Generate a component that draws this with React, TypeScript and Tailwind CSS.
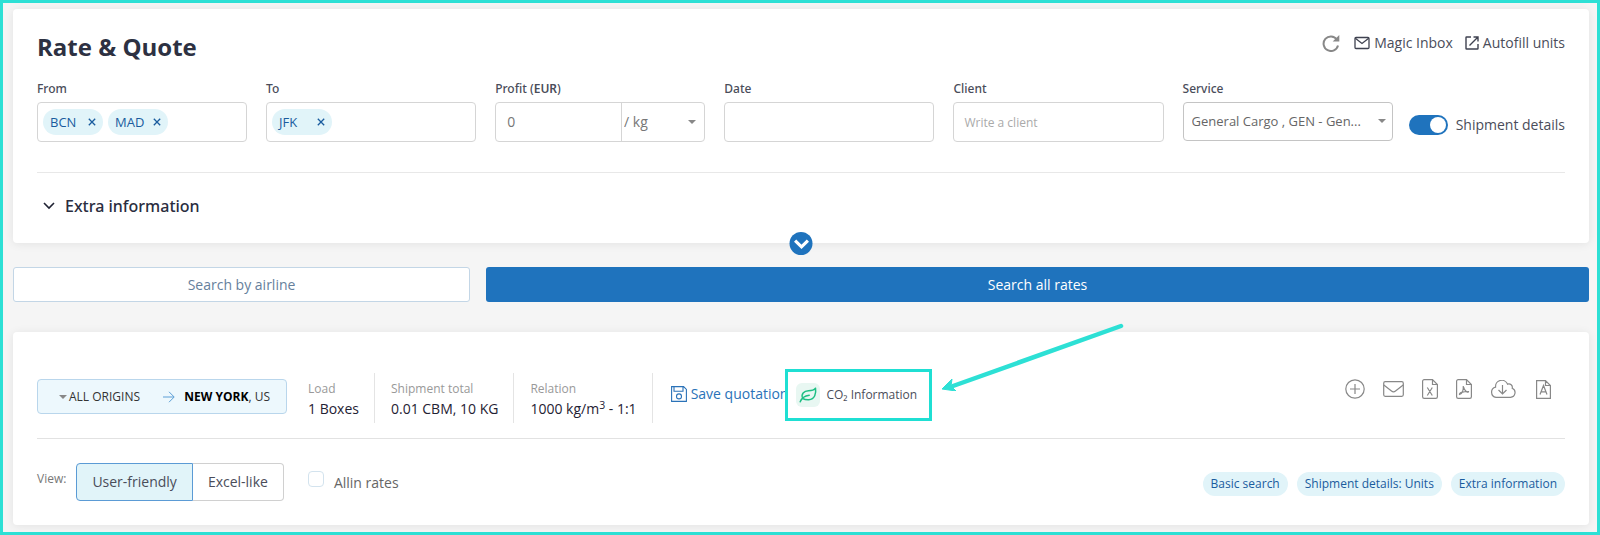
import React from "react";

const chip = "flex h-6 items-center rounded-full bg-[#e1f4f9] px-2 text-[#1a5c9e]";
const fieldBox = "h-10 w-full rounded border border-[#d5d5d5] bg-white";

function Caret({ className = "" }: { className?: string }) {
  return (
    <svg viewBox="0 0 8 4" className={`h-1 w-2 fill-[#888] ${className}`} aria-hidden="true">
      <path d="M0 0h8L4 4z" />
    </svg>
  );
}

function Field({ id, label, children }: { id: string; label: React.ReactNode; children: React.ReactNode }) {
  return (
    <div className="min-w-0">
      <label htmlFor={id} className="mb-[3px] block font-['Noto_Sans',sans-serif] text-xs leading-5 font-medium text-[#4a4d5a]">
        {label}
      </label>
      {children}
    </div>
  );
}

function TagField({ id, label, tags }: { id: string; label: string; tags: string[] }) {
  return (
    <Field id={id} label={label}>
      <div className={`${fieldBox} flex items-center gap-[5px] px-[5px]`}>
        {tags.map((tag) => (
          <span key={tag} className="flex h-[26px] w-[60px] shrink-0 items-center justify-between rounded-full bg-[#e1f4f9] px-[7px] text-[13px] text-[#1a5c9e]">
            {tag}
            <button type="button" aria-label={`Remove ${tag}`}>
              <svg viewBox="0 0 8 8" className="h-2 w-2 fill-none stroke-[#1a5c9e] stroke-[1.3]">
                <path d="M.8.8l6.4 6.4M7.2.8L.8 7.2" />
              </svg>
            </button>
          </span>
        ))}
        <input id={id} className="w-0 min-w-0 flex-1 outline-none" />
      </div>
    </Field>
  );
}

function Stat({ label, children }: { label: string; children: React.ReactNode }) {
  return (
    <div className="flex h-[50px] flex-col justify-center border-r border-[#e4e4e4] pt-0.5 pr-[15px]">
      <span className="text-xs leading-5 text-[#999]">{label}</span>
      <span className="text-sm leading-5 text-[#1f2233]">{children}</span>
    </div>
  );
}

function IconButton({ label, className, children }: { label: string; className: string; children: React.ReactNode }) {
  return (
    <button type="button" aria-label={label} className={className}>
      {children}
    </button>
  );
}

const thin = "h-full w-full fill-none stroke-[#888] stroke-[1.2]";

export default function App() {
  return (
    <div className="min-h-[535px] border-[3px] border-[#2de0d5] bg-[#f5f5f5] pt-1.5 pr-2 pb-[7px] pl-2.5 font-['Open_Sans','Noto_Sans',sans-serif] text-sm text-[#4a4d5a]">
      <section className="relative rounded bg-white px-6 pt-5 pb-[23px] shadow-[0_1px_10px_rgba(0,0,0,0.08)]">
        <header className="flex items-start justify-between">
          <h1 className="pt-0.5 text-2xl leading-8 font-bold text-[#2d3142]">Rate &amp; Quote</h1>
          <div className="flex h-7 items-center gap-3">
            <IconButton label="Refresh" className="mr-0.5 h-[18px] w-[18px]">
              <svg viewBox="0 0 18 18" className="h-full w-full fill-none stroke-[#888] stroke-2">
                <path d="M14.8 5.4A7.3 7.3 0 1 0 16 11.4" />
                <path d="M17.3 1v6.6h-6.6z" className="fill-[#888] stroke-none" />
              </svg>
            </IconButton>
            <a href="#inbox" className="flex items-center gap-1">
              <svg viewBox="0 0 16 14" className="h-3.5 w-4 fill-none stroke-[#3f4250] stroke-[1.3]">
                <rect x="1" y="1.5" width="14" height="11" rx="1" />
                <path d="M1.3 2.2L8 7.5l6.700-5.300" />
              </svg>
              Magic Inbox
            </a>
            <a href="#autofill" className="flex items-center gap-1">
              <svg viewBox="0 0 14 14" className="h-3.5 w-3.5 fill-none stroke-[#3f4250] stroke-[1.4]">
                <path d="M6 1H1.600a.6.6 0 0 0-.6.6v10.800a.6.6 0 0 0 .6.6h10.800a.6.6 0 0 0 .6-.6V8M8.500 1H13v4.500M13 1L4.500 9.500" />
              </svg>
              Autofill units
            </a>
          </div>
        </header>

        <div className="mt-4 flex gap-4">
          <div className="grid min-w-0 flex-1 grid-cols-6 gap-[19px]">
            <TagField id="from" label="From" tags={["BCN", "MAD"]} />
            <TagField id="to" label="To" tags={["JFK"]} />
            <Field id="profit" label={<>Profit (<b className="font-semibold">EUR</b>)</>}>
              <div className={`${fieldBox} flex text-[#777]`}>
                <input id="profit" defaultValue="0" className="w-3/5 px-[11px] outline-none" />
                <div className="relative w-2/5 border-l border-[#d5d5d5]">
                  <select aria-label="Profit unit" className="h-full w-full appearance-none px-0.5 outline-none">
                    <option>/ kg</option>
                  </select>
                  <Caret className="pointer-events-none absolute top-[17px] right-2" />
                </div>
              </div>
            </Field>
            <Field id="date" label="Date">
              <input id="date" className={`${fieldBox} px-2.5 outline-none`} />
            </Field>
            <Field id="client" label="Client">
              <input id="client" placeholder="Write a client" className={`${fieldBox} px-2.5 text-xs outline-none placeholder:text-[#aaa]`} />
            </Field>
            <Field id="service" label="Service">
              <div className="relative">
                <select id="service" className="h-[39px] w-full appearance-none rounded border border-[#c4c4c4] bg-white pr-7 pl-2 text-[13px] text-ellipsis text-[#666] outline-none">
                  <option>General Cargo , GEN - Gen...</option>
                </select>
                <Caret className="pointer-events-none absolute top-[17px] right-[7px]" />
              </div>
            </Field>
          </div>
          <label className="mt-[34px] flex h-6 items-center gap-2 whitespace-nowrap">
            <input
              type="checkbox"
              defaultChecked
              className="h-5 w-[39px] appearance-none rounded-full bg-[#bbb] p-0.5 before:block before:h-4 before:w-4 before:rounded-full before:bg-white checked:bg-[#1f73bd] checked:before:ml-auto"
            />
            Shipment details
          </label>
        </div>

        <hr className="mt-[30px] border-[#e8e8e8]" />
        <button type="button" className="mt-[19px] flex h-7 items-center gap-2.5 pl-1.5 font-['Noto_Sans',sans-serif] text-base font-medium text-[#2a2d40]">
          <svg viewBox="0 0 12 8" className="h-2 w-3 fill-none stroke-[#1f2233] stroke-[1.6]">
            <path d="M1 1l5 5 5-5" />
          </svg>
          Extra information
        </button>
        <button type="button" aria-label="Collapse search" className="absolute -bottom-3 left-1/2 flex h-[23px] w-[23px] -translate-x-1/2 items-center justify-center rounded-full bg-[#1f73bd]">
          <svg viewBox="0 0 16 10" className="h-2.5 w-4 fill-none stroke-white stroke-[3.200]">
            <path d="M1.600 1.700L8 7.800l6.400-6.100" />
          </svg>
        </button>
      </section>

      <div className="mt-6 flex gap-4">
        <button type="button" className="h-[35px] w-[29%] rounded-[3px] border border-[#c3d6e6] bg-white text-[#66809c]">
          Search by airline
        </button>
        <button type="button" className="h-[35px] flex-1 rounded-[3px] bg-[#1f73bd] font-medium text-white">
          Search all rates
        </button>
      </div>

      <section className="mt-[30px] rounded bg-white px-6 pt-[41px] pb-6 shadow-[0_1px_10px_rgba(0,0,0,0.08)]">
        <div className="flex h-[50px] items-start">
          <div className="mt-1.5 flex h-[35px] w-[250px] items-center rounded border border-[#b9d6ec] bg-[#edf8fd] pl-[21px] text-xs text-[#333]">
            <Caret className="mr-0.5" />
            ALL ORIGINS
            <svg viewBox="0 0 12 12" className="mr-[9px] ml-auto h-3 w-3 fill-none stroke-[#5d9fd6] stroke-1">
              <path d="M0 6h11M6 .8L11.200 6 6 11.200" />
            </svg>
            <span className="mr-4"><b className="text-black">NEW YORK</b>, US</span>
          </div>
          <div className="ml-[21px] flex gap-4">
            <Stat label="Load">1 Boxes</Stat>
            <Stat label="Shipment total">0.01 CBM, 10 KG</Stat>
            <Stat label="Relation">1000 kg/m<sup>3</sup> - 1:1</Stat>
          </div>
          <button type="button" className="mt-[11px] ml-[18px] flex items-center gap-1 whitespace-nowrap text-[#2a72b8]">
            <svg viewBox="0 0 16 16" className="h-4 w-4 fill-none stroke-[#2a72b8] stroke-[1.100]">
              <path d="M.6.6h12l2.800 2.800v12H.6zM3 .8v4.400h9V.8" />
              <circle cx="8" cy="10.400" r="2.500" />
            </svg>
            Save quotation
          </button>
          <div className="relative -mt-1 -ml-[3px] w-[147px] shrink-0 border-[3px] border-[#1fdfd3] bg-white">
            <button type="button" className="flex h-[46px] items-center gap-1.5 pl-2 text-xs whitespace-nowrap">
              <span className="flex h-6 w-6 items-center justify-center rounded-md bg-[#e8f7f2]">
                <svg viewBox="0 0 18 16" className="h-4 w-[18px] fill-none stroke-[#1dbf84] stroke-[1.500]" strokeLinecap="round" strokeLinejoin="round">
                  <path d="M1.200 14.800c1.500-3.800 4.500-6 9-6.500M3.800 11.500C1.600 7.200 5 3.900 9.500 3.700c3 0 5.400-.4 7-2.500.8 5-.6 11.300-6.700 11.600-2.300.1-4.300-.2-6-1.300z" />
                </svg>
              </span>
              <span>CO₂ Information</span>
            </button>
            <svg viewBox="0 0 184 72" className="pointer-events-none absolute -top-[53px] left-[153px] h-[72px] w-[184px] fill-none stroke-[#2de0d5]" aria-hidden="true">
              <path d="M180 7L12 67" strokeWidth="4.500" strokeLinecap="round" />
              <path d="M1 70L11 60l-1 7 5 5z" className="fill-[#2de0d5]" strokeWidth="1" />
            </svg>
          </div>
          <div className="mt-1.5 mr-[14px] ml-auto flex items-center">
            <IconButton label="Add" className="h-5 w-5">
              <svg viewBox="0 0 20 20" className={thin}>
                <circle cx="10" cy="10" r="9.200" />
                <path d="M10 5v10M5 10h10" />
              </svg>
            </IconButton>
            <IconButton label="Send by email" className="ml-[18px] h-4 w-[21px]">
              <svg viewBox="0 0 21 16" className={thin}>
                <rect x=".7" y=".7" width="19.600" height="14.600" rx="1.500" />
                <path d="M.8 4l7.700 6c1.300 1 2.700 1 4 0l7.700-6" />
              </svg>
            </IconButton>
            <IconButton label="Export to Excel" className="ml-[18px] h-5 w-4">
              <svg viewBox="0 0 16 20" className={thin}>
                <path d="M10.500.6H2.200A1.600 1.600 0 0 0 .6 2.200v15.600a1.600 1.600 0 0 0 1.600 1.600h11.600a1.600 1.600 0 0 0 1.600-1.600V5.500zM10.500.6v4.900h4.900M5.300 8.500l5 8M10.300 8.500l-5 8" />
              </svg>
            </IconButton>
            <IconButton label="Export to PDF" className="ml-[18px] h-5 w-4">
              <svg viewBox="0 0 16 20" className={thin}>
                <path d="M10.500.6H2.200A1.600 1.600 0 0 0 .6 2.200v15.600a1.600 1.600 0 0 0 1.600 1.600h11.600a1.600 1.600 0 0 0 1.600-1.600V5.500zM10.500.6v4.900h4.900" />
                <path d="M7.300 7c.2 4-1 7.500-3.800 8.500C2.700 14 7 12.500 12.500 12.500c.5 1.800-4 .6-5.200-5.500z" />
              </svg>
            </IconButton>
            <IconButton label="Download" className="ml-[18px] h-[18px] w-[26px]">
              <svg viewBox="0 0 26 18" className={thin}>
                <path d="M6 17.300h14.500a4.700 4.700 0 0 0 1.700-9 3.500 3.500 0 0 0-4.700-4.200A6.200 6.200 0 0 0 5.600 7.100 5.200 5.200 0 0 0 6 17.300zM12.500 5v9M8.500 10l4 4 4-4" />
              </svg>
            </IconButton>
            <IconButton label="Export text" className="ml-5 h-[19px] w-[15px]">
              <svg viewBox="0 0 15 19" className={thin}>
                <path d="M9.500.6H.6v17.800h13.800V5.500zM9.500.6v4.900h4.900M4 14.500l3.500-9 3.500 9M5 11.800h5" />
              </svg>
            </IconButton>
          </div>
        </div>

        <hr className="mt-[15px] border-[#e2e2e2]" />
        <div className="mt-6 flex items-center">
          <span className="mb-1.5 text-xs text-[#777]">View:</span>
          <div className="ml-2.5 flex h-[38px]">
            <button type="button" className="rounded-l border border-[#5b9bd5] bg-[#e1f4f9] px-[15px]">User-friendly</button>
            <button type="button" className="rounded-r border border-l-0 border-[#d0d0d0] bg-white px-[15px]">Excel-like</button>
          </div>
          <label className="ml-6 flex items-center gap-2.5 pt-0.5 text-[#666]">
            <input type="checkbox" className="mb-2 h-4 w-4 appearance-none rounded-sm border border-[#d3e3ee]" />
            Allin rates
          </label>
          <div className="ml-auto flex gap-[9px] pt-1 text-xs">
            <span className={chip}>Basic search</span>
            <span className={chip}>Shipment details: Units</span>
            <span className={chip}>Extra information</span>
          </div>
        </div>
      </section>
    </div>
  );
}
